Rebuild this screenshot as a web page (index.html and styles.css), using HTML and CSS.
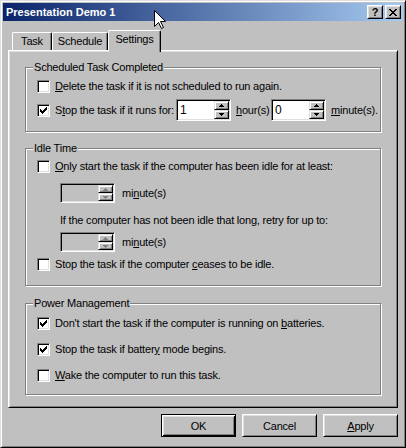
FILE: index.html
```html
<!DOCTYPE html>
<html>
<head>
<meta charset="utf-8">
<title>Presentation Demo 1</title>
<link rel="stylesheet" href="styles.css">
</head>
<body>
<div class="window">
  <div class="titlebar">
    <span class="title">Presentation Demo 1</span>
    <div class="tbtns">
      <span class="tbtn help">?</span>
      <span class="tbtn close"><svg width="8" height="7" viewBox="0 0 8 7" shape-rendering="crispEdges"><path d="M0 0h2v1H0z M6 0h2v1H6z M1 1h2v1H1z M5 1h2v1H5z M2 2h4v1H2z M3 3h2v1H3z M2 4h4v1H2z M1 5h2v1H1z M5 5h2v1H5z M0 6h2v1H0z M6 6h2v1H6z" fill="#000"/></svg></span>
    </div>
  </div>

  <div class="tabs">
    <div class="tab t1">Task</div>
    <div class="tab t2">Schedule</div>
    <div class="tab t3 sel">Settings</div>
  </div>

  <div class="panel">
    <div class="group g1">
      <div class="legend">Scheduled Task Completed</div>
      <div class="row h24">
        <span class="cb"></span>
        <span class="lbl"><u>D</u>elete the task if it is not scheduled to run again.</span>
      </div>
      <div class="row h24">
        <span class="cb"><svg class="chk" width="7" height="7" viewBox="0 0 7 7" shape-rendering="crispEdges"><path d="M6 0h1v1h-1z M5 1h2v1h-2z M0 2h1v1H0z M4 2h3v1H4z M0 3h2v1H0z M3 3h3v1H3z M0 4h5v1H0z M1 5h3v1H1z M2 6h1v1H2z" fill="#000"/></svg></span>
        <span class="lbl w-stop">S<u>t</u>op the task if it runs for:</span>
        <span class="spin">
          <span class="spin-val">1</span>
          <span class="spin-btns">
            <span class="sb"><svg width="5" height="3" viewBox="0 0 5 3" shape-rendering="crispEdges"><path d="M2 0h1v1h1v1h1v1H0V2h1V1h1z" fill="#000"/></svg></span>
            <span class="sb"><svg width="5" height="3" viewBox="0 0 5 3" shape-rendering="crispEdges"><path d="M0 0h5v1H4v1H3v1H2V2H1V1H0z" fill="#000"/></svg></span>
          </span>
        </span>
        <span class="lbl unit-h"><u>h</u>our(s)</span>
        <span class="spin">
          <span class="spin-val">0</span>
          <span class="spin-btns">
            <span class="sb"><svg width="5" height="3" viewBox="0 0 5 3" shape-rendering="crispEdges"><path d="M2 0h1v1h1v1h1v1H0V2h1V1h1z" fill="#000"/></svg></span>
            <span class="sb"><svg width="5" height="3" viewBox="0 0 5 3" shape-rendering="crispEdges"><path d="M0 0h5v1H4v1H3v1H2V2H1V1H0z" fill="#000"/></svg></span>
          </span>
        </span>
        <span class="lbl unit-m"><u>m</u>inute(s).</span>
      </div>
    </div>

    <div class="group g2">
      <div class="legend">Idle Time</div>
      <div class="row h22">
        <span class="cb"></span>
        <span class="lbl"><u>O</u>nly start the task if the computer has been idle for at least:</span>
      </div>
      <div class="row h32 indent">
        <span class="spin dis">
          <span class="spin-val"></span>
          <span class="spin-btns">
            <span class="sb"><svg width="5" height="3" viewBox="0 0 5 3" shape-rendering="crispEdges"><path d="M2 0h1v1h1v1h1v1H0V2h1V1h1z" fill="#808080"/></svg></span>
            <span class="sb"><svg width="5" height="3" viewBox="0 0 5 3" shape-rendering="crispEdges"><path d="M0 0h5v1H4v1H3v1H2V2H1V1H0z" fill="#808080"/></svg></span>
          </span>
        </span>
        <span class="lbl unit-idle">mi<u>n</u>ute(s)</span>
      </div>
      <div class="row h22 indent">
        <span class="lbl">If the computer has not been idle that long, retry for up to:</span>
      </div>
      <div class="row h22 indent">
        <span class="spin dis">
          <span class="spin-val"></span>
          <span class="spin-btns">
            <span class="sb"><svg width="5" height="3" viewBox="0 0 5 3" shape-rendering="crispEdges"><path d="M2 0h1v1h1v1h1v1H0V2h1V1h1z" fill="#808080"/></svg></span>
            <span class="sb"><svg width="5" height="3" viewBox="0 0 5 3" shape-rendering="crispEdges"><path d="M0 0h5v1H4v1H3v1H2V2H1V1H0z" fill="#808080"/></svg></span>
          </span>
        </span>
        <span class="lbl unit-idle">mi<u>n</u>ute(s)</span>
      </div>
      <div class="row h22">
        <span class="cb"></span>
        <span class="lbl">Stop the task if the computer <u>c</u>eases to be idle.</span>
      </div>
    </div>

    <div class="group g3">
      <div class="legend">Power Management</div>
      <div class="row h26">
        <span class="cb"><svg class="chk" width="7" height="7" viewBox="0 0 7 7" shape-rendering="crispEdges"><path d="M6 0h1v1h-1z M5 1h2v1h-2z M0 2h1v1H0z M4 2h3v1H4z M0 3h2v1H0z M3 3h3v1H3z M0 4h5v1H0z M1 5h3v1H1z M2 6h1v1H2z" fill="#000"/></svg></span>
        <span class="lbl">Don't start the task if the computer is running on <u>b</u>atteries.</span>
      </div>
      <div class="row h26">
        <span class="cb"><svg class="chk" width="7" height="7" viewBox="0 0 7 7" shape-rendering="crispEdges"><path d="M6 0h1v1h-1z M5 1h2v1h-2z M0 2h1v1H0z M4 2h3v1H4z M0 3h2v1H0z M3 3h3v1H3z M0 4h5v1H0z M1 5h3v1H1z M2 6h1v1H2z" fill="#000"/></svg></span>
        <span class="lbl">Stop the task if batter<u>y</u> mode begins.</span>
      </div>
      <div class="row h26">
        <span class="cb"></span>
        <span class="lbl"><u>W</u>ake the computer to run this task.</span>
      </div>
    </div>
  </div>

  <div class="buttons">
    <span class="btn default">OK</span>
    <span class="btn">Cancel</span>
    <span class="btn"><u>A</u>pply</span>
  </div>

  <svg class="cursor" width="12" height="19" viewBox="0 0 12 19"><path d="M0.5 0.5 V16.5 L4.5 12.5 L7.5 18.5 L9.5 17.5 L6.5 11.5 H11.5 Z" fill="#fff" stroke="#000" stroke-width="1"/></svg>
</div>
</body>
</html>
```
FILE: styles.css
```css
* { box-sizing: border-box; }
html, body { margin: 0; padding: 0; }
body {
  font-family: "Liberation Sans", Arial, sans-serif;
  font-size: 11px;
  letter-spacing: -0.2px;
  color: #000;
  background: #c0c0c0;
}
u { text-decoration: underline; text-underline-offset: 1px; }

.window {
  position: relative;
  width: 406px;
  height: 448px;
  background: #c0c0c0;
  border: 1px solid;
  border-color: #dfdfdf #000 #000 #dfdfdf;
  box-shadow: inset 1px 1px #fff, inset -1px -1px #808080;
  padding: 2px;
  display: flex;
  flex-direction: column;
}

.titlebar {
  height: 18px;
  flex: none;
  display: flex;
  align-items: center;
  justify-content: space-between;
  background: linear-gradient(to right, #0a246a, #a6caf0);
  padding: 0 2px 0 3px;
}
.title {
  color: #fff;
  font-weight: bold;
  font-size: 11px;
  letter-spacing: 0;
}
.tbtns { display: flex; gap: 2px; }
.tbtn {
  width: 16px;
  height: 14px;
  background: #c0c0c0;
  border: 1px solid;
  border-color: #fff #000 #000 #fff;
  box-shadow: inset 1px 1px #dfdfdf, inset -1px -1px #808080;
  display: flex;
  align-items: center;
  justify-content: center;
  font-weight: bold;
  font-size: 11px;
  line-height: 1;
  letter-spacing: 0;
}

.tabs {
  display: flex;
  align-items: flex-end;
  height: 20px;
  flex: none;
  margin: 9px 0 0 9px;
}
.tab {
  height: 18px;
  border-top: 1px solid #fff;
  border-left: 1px solid #fff;
  border-right: 1px solid #000;
  border-radius: 2px 2px 0 0;
  box-shadow: inset -1px 0 #808080;
  display: flex;
  align-items: center;
  justify-content: center;
  padding-bottom: 1px;
  background: #c0c0c0;
}
.t1 { width: 40px; }
.t2 { width: 56px; }
.t3 { width: 53px; }
.tab.sel {
  height: 22px;
  margin-bottom: -2px;
  padding-bottom: 5px;
  position: relative;
  z-index: 1;
}

.panel {
  margin: 0 5px;
  border: 1px solid;
  border-color: #fff #000 #000 #fff;
  box-shadow: inset 1px 1px #dfdfdf, inset -1px -1px #808080;
  padding: 16px 16px 12px 16px;
  flex: none;
}

.group {
  border: 1px solid #808080;
  box-shadow: inset 1px 1px #fff, 1px 1px #fff;
}
.g1 { padding-bottom: 9px; }
.g2 { margin-top: 16px; padding-bottom: 10px; }
.g3 { margin-top: 17px; padding-top: 1px; padding-bottom: 6px; }
.g3 .legend { margin-top: -8px; }

.legend {
  width: fit-content;
  height: 13px;
  line-height: 13px;
  margin: -7px 0 0 7px;
  padding: 0 1px;
  background: #c0c0c0;
  white-space: nowrap;
}

.row {
  display: flex;
  align-items: center;
  padding-left: 11px;
  white-space: nowrap;
}
.row.indent { padding-left: 34px; }
.h22 { height: 22px; }
.h24 { height: 24px; }
.h26 { height: 26px; }
.h32 { height: 32px; }

.cb {
  width: 13px;
  height: 13px;
  flex: none;
  margin-right: 5px;
  background: #fff;
  border: 1px solid;
  border-color: #808080 #fff #fff #808080;
  box-shadow: inset 1px 1px #000, inset -1px -1px #dfdfdf;
  display: flex;
  align-items: center;
  justify-content: center;
}
.chk { display: block; }

.lbl { display: block; }
.w-stop { width: 121px; flex: none; }
.unit-h { width: 35px; margin-left: 5px; flex: none; }
.unit-m { margin-left: 5px; }
.unit-idle { margin-left: 7px; }

.spin {
  width: 55px;
  height: 22px;
  flex: none;
  display: flex;
  background: #fff;
  border: 1px solid;
  border-color: #808080 #fff #fff #808080;
  box-shadow: inset 1px 1px #000, inset -1px -1px #dfdfdf;
  padding: 1px;
}
.spin.dis { height: 20px; background: #c0c0c0; }
.spin-val {
  flex: 1;
  padding-left: 2px;
  display: flex;
  align-items: center;
  font-size: 12px;
}
.spin-btns {
  width: 15px;
  display: flex;
  flex-direction: column;
}
.sb {
  flex: 1;
  background: #c0c0c0;
  border: 1px solid;
  border-color: #dfdfdf #000 #000 #dfdfdf;
  box-shadow: inset 1px 1px #fff, inset -1px -1px #808080;
  display: flex;
  align-items: center;
  justify-content: center;
}
.sb svg { display: block; }

.buttons {
  display: flex;
  justify-content: flex-end;
  gap: 6px;
  margin-top: 6px;
  padding-right: 5px;
  flex: none;
}
.btn {
  width: 75px;
  height: 23px;
  display: flex;
  align-items: center;
  justify-content: center;
  background: #c0c0c0;
  border: 1px solid;
  border-color: #fff #000 #000 #fff;
  box-shadow: inset 1px 1px #dfdfdf, inset -1px -1px #808080;
}
.btn.default {
  border-color: #000;
  box-shadow: inset 1px 1px #fff, inset -1px -1px #000, inset 2px 2px #dfdfdf, inset -2px -2px #808080;
}

.cursor {
  position: absolute;
  left: 153px;
  top: 9px;
}
```
